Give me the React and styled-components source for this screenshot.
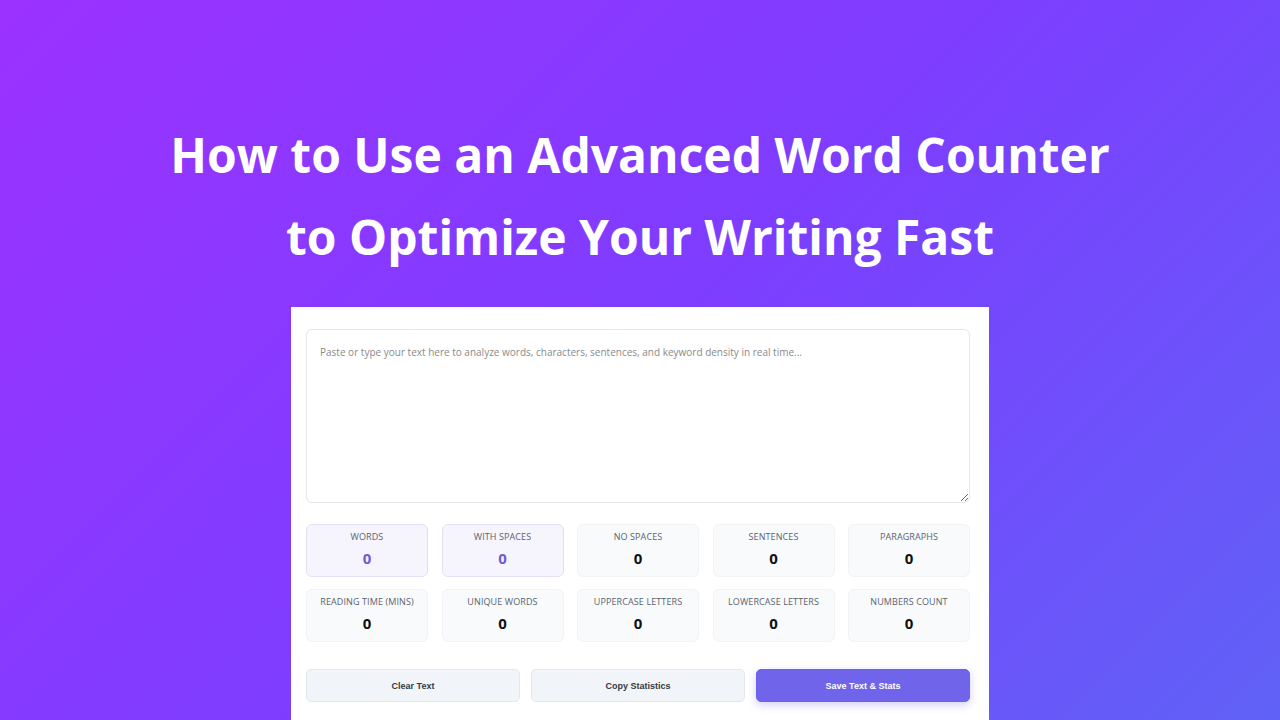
import React from "react";
import styled, { createGlobalStyle } from "styled-components";

const Global = createGlobalStyle`
  html, body { margin: 0; padding: 0; }
  body {
    width: 1280px; height: 720px; overflow: hidden;
    font-family: "Open Sans", "Noto Sans", sans-serif;
  }
  * { box-sizing: border-box; }
`;

const Page = styled.div`
  width: 1280px;
  height: 720px;
  overflow: hidden;
  background: linear-gradient(135deg, #9c32ff 0%, #7d3dff 50%, #6062f7 100%);
  display: flex;
  flex-direction: column;
  align-items: center;
`;

const Title = styled.h1`
  margin: 114px 0 0;
  color: #ffffff;
  font-family: "Open Sans", "Noto Sans", sans-serif;
  font-weight: 700;
  font-size: 48px;
  line-height: 82px;
  text-align: center;
  letter-spacing: 0;
`;

const Card = styled.div`
  margin-top: 29px;
  width: 698px;
  flex: 1;
  background: #ffffff;
  padding: 22px 19px 0 15px;
  display: flex;
  flex-direction: column;
`;

const TextArea = styled.textarea`
  width: 664px;
  height: 174px;
  border: 1px solid #e5e7eb;
  border-radius: 6px;
  padding: 15px 13px;
  font-family: "Open Sans", "Noto Sans", sans-serif;
  font-size: 10px;
  color: #333;
  resize: vertical;
  outline: none;
  &::placeholder { color: #8a8a8a; }
`;

const StatsGrid = styled.div`
  margin-top: 21px;
  display: grid;
  grid-template-columns: repeat(5, 1fr);
  gap: 12px 13.5px;
`;

const StatBox = styled.div`
  height: 53px;
  border-radius: 6px;
  background: ${(p) => (p.$accent ? "#f6f5fe" : "#f8fafc")};
  border: 1px solid ${(p) => (p.$accent ? "#e3e1f6" : "#f1f3f6")};
  display: flex;
  flex-direction: column;
  align-items: center;
  padding-top: 6px;
`;

const StatLabel = styled.div`
  font-family: "Open Sans", "Noto Sans", sans-serif;
  font-size: 9px;
  line-height: 12px;
  color: #5b6270;
  text-transform: uppercase;
  letter-spacing: 0.1px;
`;

const StatValue = styled.div`
  margin-top: 6px;
  font-family: "Open Sans", "Noto Sans", sans-serif;
  font-size: 15px;
  line-height: 19px;
  font-weight: 700;
  color: ${(p) => (p.$accent ? "#6d5bd6" : "#111111")};
`;

const Buttons = styled.div`
  margin-top: 27px;
  display: grid;
  grid-template-columns: repeat(3, 1fr);
  gap: 11px;
`;

const Button = styled.button`
  height: 33px;
  border-radius: 5px;
  font-family: "Liberation Sans", Arial, sans-serif;
  font-size: 9px;
  font-weight: 700;
  cursor: pointer;
  border: 1px solid ${(p) => (p.$primary ? "#6c63e9" : "#e3e8ef")};
  background: ${(p) => (p.$primary ? "#6f64ea" : "#f1f5f9")};
  color: ${(p) => (p.$primary ? "#ffffff" : "#333a44")};
  box-shadow: ${(p) => (p.$primary ? "0 3px 8px rgba(108, 99, 233, 0.3)" : "none")};
`;

const stats = [
  ["Words", true],
  ["With Spaces", true],
  ["No Spaces", false],
  ["Sentences", false],
  ["Paragraphs", false],
  ["Reading Time (mins)", false],
  ["Unique Words", false],
  ["Uppercase Letters", false],
  ["Lowercase Letters", false],
  ["Numbers Count", false],
];

export default function App() {
  return (
    <>
      <Global />
      <Page>
        <Title>
          How to Use an Advanced Word Counter
          <br />
          to Optimize Your Writing Fast
        </Title>
        <Card>
          <TextArea placeholder="Paste or type your text here to analyze words, characters, sentences, and keyword density in real time..." />
          <StatsGrid>
            {stats.map(([label, accent]) => (
              <StatBox key={label} $accent={accent}>
                <StatLabel>{label}</StatLabel>
                <StatValue $accent={accent}>0</StatValue>
              </StatBox>
            ))}
          </StatsGrid>
          <Buttons>
            <Button>Clear Text</Button>
            <Button>Copy Statistics</Button>
            <Button $primary>Save Text &amp; Stats</Button>
          </Buttons>
        </Card>
      </Page>
    </>
  );
}
